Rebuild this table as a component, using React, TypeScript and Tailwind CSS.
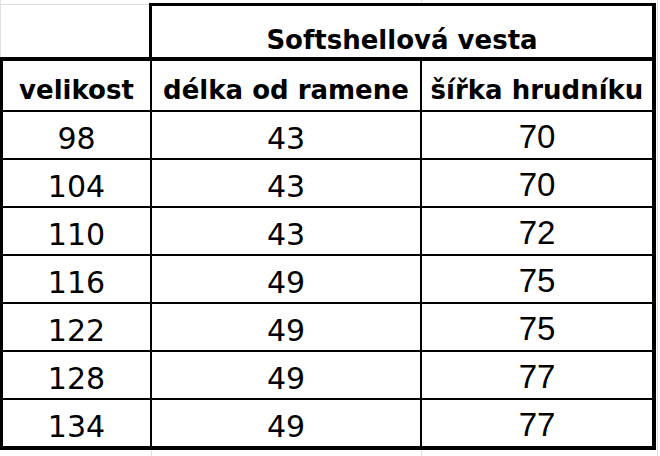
const ROWS: [string, string, string][] = [
  ['98', '43', '70'],
  ['104', '43', '70'],
  ['110', '43', '72'],
  ['116', '49', '75'],
  ['122', '49', '75'],
  ['128', '49', '77'],
  ['134', '49', '77'],
];

// faint sheet gridlines around the bordered table
function SheetGrid() {
  return (
    <div className="pointer-events-none absolute inset-0">
      <div className="absolute left-[657px] top-0 h-[456px] w-px bg-[#e1e1e1]" />
      <div className="absolute left-[421px] top-0 h-[3px] w-px bg-[#e1e1e1]" />
      <div className="absolute left-[151px] top-[450px] h-[6px] w-px bg-[#e1e1e1]" />
      <div className="absolute left-[421px] top-[450px] h-[6px] w-px bg-[#e1e1e1]" />
      <div className="absolute left-0 top-0 h-[57px] w-px bg-[#e1e1e1]" />
    </div>
  );
}

export default function App() {
  return (
    <div className="relative h-[456px] w-[660px] overflow-hidden bg-white text-black font-['DejaVu_Sans',sans-serif]">
      <SheetGrid />
      <div className="relative flex h-[57px]">
        <div className="w-[149px] pt-[4px]">
          <div className="border-t border-[#dcdcdc]" />
        </div>
        <div className="mt-[3px] flex w-[507px] items-end justify-center border-l-[3px] border-r-[4px] border-t-[3px] border-black pb-[4px] text-[26px] font-bold leading-none">
          Softshellová vesta
        </div>
      </div>

      <div className="relative w-[656px] border-b-[4px] border-l-[3px] border-r-[4px] border-t-[4px] border-black">
        <div className="flex h-[51px] border-b-2 border-black text-[26px] font-bold leading-none">
          <div className="flex w-[149px] items-end justify-center border-r-2 border-black pb-[7px]">velikost</div>
          <div className="flex w-[270px] items-end justify-center border-r-2 border-black pb-[7px]">délka od ramene</div>
          <div className="flex flex-1 items-end justify-center pb-[7px]">šířka hrudníku</div>
        </div>
        {ROWS.map(([size, len, width], i) => (
          <div
            key={size}
            className={`flex leading-none ${i < ROWS.length - 1 ? 'h-[48px] border-b-2 border-black' : 'h-[46px]'}`}
          >
            <div className="flex w-[149px] items-end justify-center border-r-2 border-black pb-[4px] text-[30px]">{size}</div>
            <div className="flex w-[270px] items-end justify-center border-r-2 border-black pb-[4px] text-[30px]">{len}</div>
            <div className="flex flex-1 items-end justify-center pb-[5px] font-['Liberation_Sans',sans-serif] text-[33px]">
              {width}
            </div>
          </div>
        ))}
      </div>
    </div>
  );
}
